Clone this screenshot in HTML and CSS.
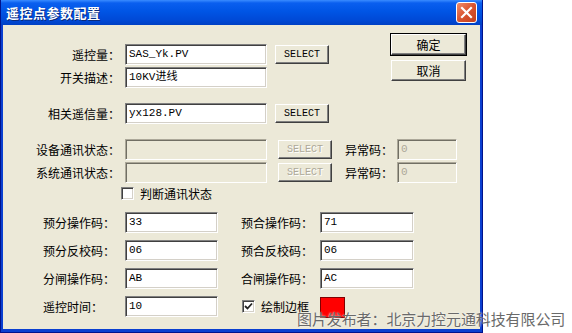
FILE: index.html
```html
<!DOCTYPE html>
<html>
  <head>
    <meta charset="utf-8" />
    <title>遥控点参数配置</title>
    <link rel="stylesheet" href="styles.css">
  </head>
  <body>
    <div class="window">
      <!-- Title bar -->
      <div class="titlebar">
        <span class="title">遥控点参数配置</span>
        <span class="close-button">
          <svg width="13" height="13" viewBox="0 0 13 13">
            <path d="M2 2L11 11M11 2L2 11" stroke="white" stroke-width="2.2" stroke-linecap="square" />
          </svg>
        </span>
      </div>

      <div class="client">
        <div class="main">
          <div class="form">
            <div class="row">
              <label class="label">遥控量：</label>
              <div class="field wide">SAS_Yk.PV</div>
              <button class="select-button">SELECT</button>
            </div>
            <div class="row">
              <label class="label">开关描述：</label>
              <div class="field wide">10KV进线</div>
            </div>
            <div class="row group">
              <label class="label">相关遥信量：</label>
              <div class="field wide">yx128.PV</div>
              <button class="select-button">SELECT</button>
            </div>
            <div class="row group-status">
              <label class="label">设备通讯状态：</label>
              <div class="field wide disabled"></div>
              <button class="select-button disabled-button">SELECT</button>
              <label class="code-label">异常码：</label>
              <div class="field code disabled">0</div>
            </div>
            <div class="row">
              <label class="label">系统通讯状态：</label>
              <div class="field wide disabled"></div>
              <button class="select-button disabled-button">SELECT</button>
              <label class="code-label">异常码：</label>
              <div class="field code disabled">0</div>
            </div>
            <div class="check-row">
              <span class="checkbox"></span>
              <span class="check-text">判断通讯状态</span>
            </div>
          </div>

          <div class="actions">
            <button class="button default-button">确定</button>
            <button class="button">取消</button>
          </div>
        </div>

        <div class="lower">
          <label class="label-left">预分操作码：</label>
          <div class="field">33</div>
          <span></span>
          <label class="label-left">预合操作码：</label>
          <div class="field">71</div>

          <label class="label-left">预分反校码：</label>
          <div class="field">06</div>
          <span></span>
          <label class="label-left">预合反校码：</label>
          <div class="field">06</div>

          <label class="label-left">分闸操作码：</label>
          <div class="field">AB</div>
          <span></span>
          <label class="label-left">合闸操作码：</label>
          <div class="field">AC</div>

          <label class="label-left">遥控时间：</label>
          <div class="field">10</div>
          <span></span>
          <div class="check-inline">
            <span class="checkbox checked">
              <svg width="9" height="9" viewBox="0 0 9 9">
                <path d="M1 4L3.5 6.5L8 1.5" stroke="#222" stroke-width="1.8" fill="none" />
              </svg>
            </span>
            <span class="check-text">绘制边框</span>
          </div>
          <div class="color-box"></div>
        </div>
      </div>
    </div>

    <div class="watermark">图片发布者：北京力控元通科技有限公司</div>
  </body>
</html>
```

FILE: styles.css
```css
body {
  margin: 0;
  background: #fff;
  font-family: "Noto Sans CJK SC", sans-serif;
  font-size: 12px;
  color: #000;
  position: relative;
  width: 572px;
  height: 333px;
  overflow: hidden;
}
.window {
  width: 483px;
  height: 333px;
  box-sizing: border-box;
  background: #0a3fd0;
  border-left: 1px solid #00138c;
  border-right: 1px solid #00138c;
  border-bottom: 1px solid #00138c;
  display: flex;
  flex-direction: column;
}
.titlebar {
  height: 25px;
  flex: none;
  display: flex;
  align-items: center;
  justify-content: space-between;
  padding: 0 5px 0 5px;
  background: linear-gradient(#3a8cff 0%, #0a5fef 12%, #0055e5 45%, #0049d6 80%, #0040c4 100%);
}
.title {
  color: #fff;
  font-weight: bold;
  font-size: 13px;
  letter-spacing: 0.5px;
  text-shadow: 1px 1px 0 #0b2a7a;
}
.close-button {
  width: 19px;
  height: 19px;
  border: 1px solid #fff;
  border-radius: 3px;
  background: linear-gradient(135deg, #f08c6c 0%, #d9542f 50%, #c3401e 100%);
  display: flex;
  align-items: center;
  justify-content: center;
}
.client {
  flex: 1;
  margin: 0 2px 3px 2px;
  background: #ece9d8;
  display: flex;
  flex-direction: column;
}
.main {
  display: flex;
}
.form {
  padding-top: 19px;
  width: 388px;
  flex: none;
}
.row {
  display: flex;
  align-items: center;
  height: 21px;
  margin-bottom: 2px;
}
.row > * {
  flex: none;
}
.group {
  margin-top: 15px;
}
.group-status {
  margin-top: 15px;
}
.label {
  width: 117px;
  text-align: right;
  margin-right: 5px;
  white-space: nowrap;
}
.field {
  height: 21px;
  box-sizing: border-box;
  background: #fff;
  border-style: solid;
  border-width: 1px;
  border-color: #808080 #fff #fff #808080;
  box-shadow: inset 1px 1px 0 #404040, inset -1px -1px 0 #d4d0c8;
  padding: 2px 3px;
  font-family: "Liberation Mono", "Noto Sans CJK SC", monospace;
  font-size: 11px;
  line-height: 15px;
  white-space: nowrap;
}
.wide {
  width: 142px;
}
.disabled {
  background: #ece9d8;
  color: #aca899;
  border-color: #aca899 #fff #fff #aca899;
  box-shadow: inset 1px 1px 0 #716f64;
}
.code {
  width: 60px;
}
.select-button {
  margin-left: 8px;
  width: 54px;
  height: 19px;
  padding: 0;
  background: #ece9d8;
  border-style: solid;
  border-width: 1px;
  border-color: #fff #404040 #404040 #fff;
  box-shadow: inset -1px -1px 0 #808080;
  font-family: "Liberation Mono", monospace;
  font-size: 10px;
  color: #000;
}
.disabled-button {
  margin-left: 11px;
  color: #aca899;
  text-shadow: 1px 1px 0 #fff;
}
.code-label {
  margin-left: 13px;
  margin-right: 4px;
  white-space: nowrap;
}
.check-row {
  display: flex;
  align-items: center;
  margin-top: 1px;
  padding-left: 118px;
  height: 17px;
}
.checkbox {
  width: 13px;
  height: 13px;
  box-sizing: border-box;
  background: #fff;
  border-style: solid;
  border-width: 1px;
  border-color: #808080 #fff #fff #808080;
  box-shadow: inset 1px 1px 0 #404040, inset -1px -1px 0 #d4d0c8;
  display: flex;
  align-items: center;
  justify-content: center;
  flex: none;
}
.check-text {
  margin-left: 6px;
}
.actions {
  padding-top: 9px;
  display: flex;
  flex-direction: column;
  gap: 5px;
}
.button {
  width: 75px;
  height: 21px;
  padding: 0;
  background: #ece9d8;
  border-style: solid;
  border-width: 1px;
  border-color: #fff #404040 #404040 #fff;
  box-shadow: inset -1px -1px 0 #808080;
  font-family: "Noto Sans CJK SC", sans-serif;
  font-size: 12px;
  color: #000;
}
.default-button {
  outline: 1px solid #000;
  outline-offset: 0;
}
.lower {
  margin-top: 10px;
  padding-left: 40px;
  display: grid;
  grid-template-columns: 82px 93px 23px 79px 94px;
  grid-auto-rows: 21px;
  row-gap: 7px;
  align-items: center;
}
.label-left {
  white-space: nowrap;
}
.check-inline {
  display: flex;
  align-items: center;
  margin-left: 1px;
  height: 16px;
  line-height: 16px;
}
.color-box {
  width: 25px;
  height: 21px;
  box-sizing: border-box;
  background: #ff0000;
  border: 1px solid #800000;
  margin-top: 1px;
}
.watermark {
  position: absolute;
  left: 297px;
  top: 311px;
  font-size: 15px;
  line-height: 16px;
  letter-spacing: -0.1px;
  color: #6a6a6a;
  white-space: nowrap;
  text-shadow: 0 0 2px #fff;
}
```
